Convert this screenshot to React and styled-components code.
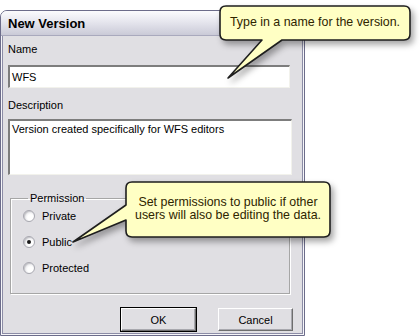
import React from 'react';
import styled, { createGlobalStyle } from 'styled-components';

// Styles

const GlobalStyle = createGlobalStyle`
  html, body {
    margin: 0;
    background: #fff;
  }
  body {
    font-family: "Liberation Sans", Arial, sans-serif;
    font-size: 11px;
    color: #000;
  }
`;

const Stage = styled.div`
  position: relative;
  width: 420px;
  height: 336px;
  padding-top: 10px;
  box-sizing: border-box;
  overflow: hidden;
`;

const Window = styled.div`
  width: 305px;
  height: 326px;
  box-sizing: border-box;
  border: 1px solid #6c6c8a;
  border-radius: 7px 7px 0 0;
  background: #f6f6f9;
  display: flex;
  flex-direction: column;
`;

const TitleBar = styled.div`
  height: 24px;
  flex: none;
  display: flex;
  align-items: center;
  padding-left: 7px;
  border-radius: 6px 6px 0 0;
  background: linear-gradient(#fbfbfd 0%, #e6e6ee 45%, #cacad7 100%);
  border-bottom: 1px solid #a9a9bd;
  font-weight: bold;
  font-size: 13px;
  color: #000;
`;

const Body = styled.div`
  flex: 1;
  margin: 0 1px 1px 1px;
  border: 1px solid #8c8ca6;
  border-top: none;
  background: #e0dfe3;
  padding: 7px 9px 0 5px;
  display: flex;
  flex-direction: column;
`;

const Label = styled.div`
  line-height: 13px;
  margin-top: ${({ gap }) => gap}px;
`;

const Field = styled.div`
  box-sizing: border-box;
  height: ${({ h }) => h}px;
  width: ${({ w }) => w}px;
  margin-top: ${({ gap }) => gap}px;
  background: #fff;
  border-style: solid;
  border-width: 2px 1px 1px 2px;
  border-color: #7d7d7d #f2f2ec #f2f2ec #7d7d7d;
  padding: ${({ multi }) => (multi ? '2px 2px' : '0 2px')};
  display: flex;
  align-items: ${({ multi }) => (multi ? 'flex-start' : 'center')};
  line-height: 13px;
`;

const GroupBox = styled.fieldset`
  box-sizing: border-box;
  margin: 17px 0 0 2px;
  width: 280px;
  height: 102px;
  padding: 0 0 0 12px;
  border: 1px solid #a6a6a6;
  box-shadow: 1px 1px 0 #fff, inset 1px 1px 0 #fff;
  display: flex;
  flex-direction: column;
  gap: 14px;

  legend {
    padding: 0 2px;
    margin-left: 5px;
    line-height: 13px;
  }
`;

const RadioRow = styled.label`
  display: flex;
  align-items: center;
  gap: 7px;
  height: 12px;
  line-height: 13px;
  &:first-of-type {
    margin-top: 5px;
  }
`;

const RadioDot = styled.span`
  position: relative;
  width: 12px;
  height: 12px;
  box-sizing: border-box;
  border-radius: 50%;
  border: 1px solid #a8a8b0;
  background: radial-gradient(circle at 65% 65%, #fff 30%, #e6e6ea 70%, #c8c8d0 100%);
  box-shadow: inset 1px 1px 1px rgba(0, 0, 0, 0.15);

  &::after {
    content: '';
    display: ${({ checked }) => (checked ? 'block' : 'none')};
    position: absolute;
    left: 3px;
    top: 3px;
    width: 4px;
    height: 4px;
    border-radius: 50%;
    background: #1a1a1a;
  }
`;

const ButtonRow = styled.div`
  display: flex;
  justify-content: flex-end;
  gap: 22px;
  margin-top: 14px;
`;

const Button = styled.button`
  box-sizing: border-box;
  width: 75px;
  height: 23px;
  font: inherit;
  font-size: 11px;
  color: #000;
  background: #e0dfe3;
  border-style: solid;
  border-width: 1px;
  border-color: #fff #6e6e6e #6e6e6e #fff;
  box-shadow: inset -1px -1px 0 #a8a8ae;
  padding: 0;
  outline: ${({ primary }) => (primary ? '1px solid #000' : 'none')};
  outline-offset: 0;
`;

const CalloutLayer = styled.svg`
  position: absolute;
  left: 0;
  top: 0;
  width: 420px;
  height: 336px;
  pointer-events: none;
  filter: drop-shadow(3px 4px 3px rgba(0, 0, 0, 0.35));
`;

const CalloutText = styled.div`
  position: absolute;
  left: ${({ x }) => x}px;
  top: ${({ y }) => y}px;
  width: ${({ w }) => w}px;
  text-align: center;
  font-size: 12.4px;
  line-height: 13px;
  color: #2e2400;
`;

// Data

const permissions = [
  { name: 'Private', checked: false },
  { name: 'Public', checked: true },
  { name: 'Protected', checked: false },
];

const nameTip = 'M226 6 H404 Q410 6 410 12 V34 Q410 40 404 40 H282 L228 78 L262 40 H226 Q220 40 220 34 V12 Q220 6 226 6 Z';
const permTip = 'M132 182 H324 Q330 182 330 188 V231 Q330 237 324 237 H132 Q126 237 126 231 V220 L73 242 L126 205 V188 Q126 182 132 182 Z';

// Component

const App = () => (
  <Stage>
    <GlobalStyle />
    <Window>
      <TitleBar>New Version</TitleBar>
      <Body>
        <Label gap={0}>Name</Label>
        <Field gap={9} h={23} w={282}>WFS</Field>
        <Label gap={11}>Description</Label>
        <Field gap={7} h={56} w={284} multi>Version created specifically for WFS editors</Field>

        <GroupBox>
          <legend>Permission</legend>
          {permissions.map((p) => (
            <RadioRow key={p.name}>
              <RadioDot checked={p.checked} />
              {p.name}
            </RadioRow>
          ))}
        </GroupBox>

        <ButtonRow>
          <Button primary>OK</Button>
          <Button>Cancel</Button>
        </ButtonRow>
      </Body>
    </Window>

    <CalloutLayer viewBox="0 0 420 336">
      <path d={nameTip} fill="#ffffc4" stroke="#1e1e1e" strokeWidth="1.6" strokeLinejoin="round" />
      <path d={permTip} fill="#ffffc4" stroke="#1e1e1e" strokeWidth="1.6" strokeLinejoin="round" />
    </CalloutLayer>
    <CalloutText x={220} y={16} w={190}>Type in a name for the version.</CalloutText>
    <CalloutText x={126} y={196} w={204}>
      Set permissions to public if other
      <br />
      users will also be editing the data.
    </CalloutText>
  </Stage>
);

export default App;
